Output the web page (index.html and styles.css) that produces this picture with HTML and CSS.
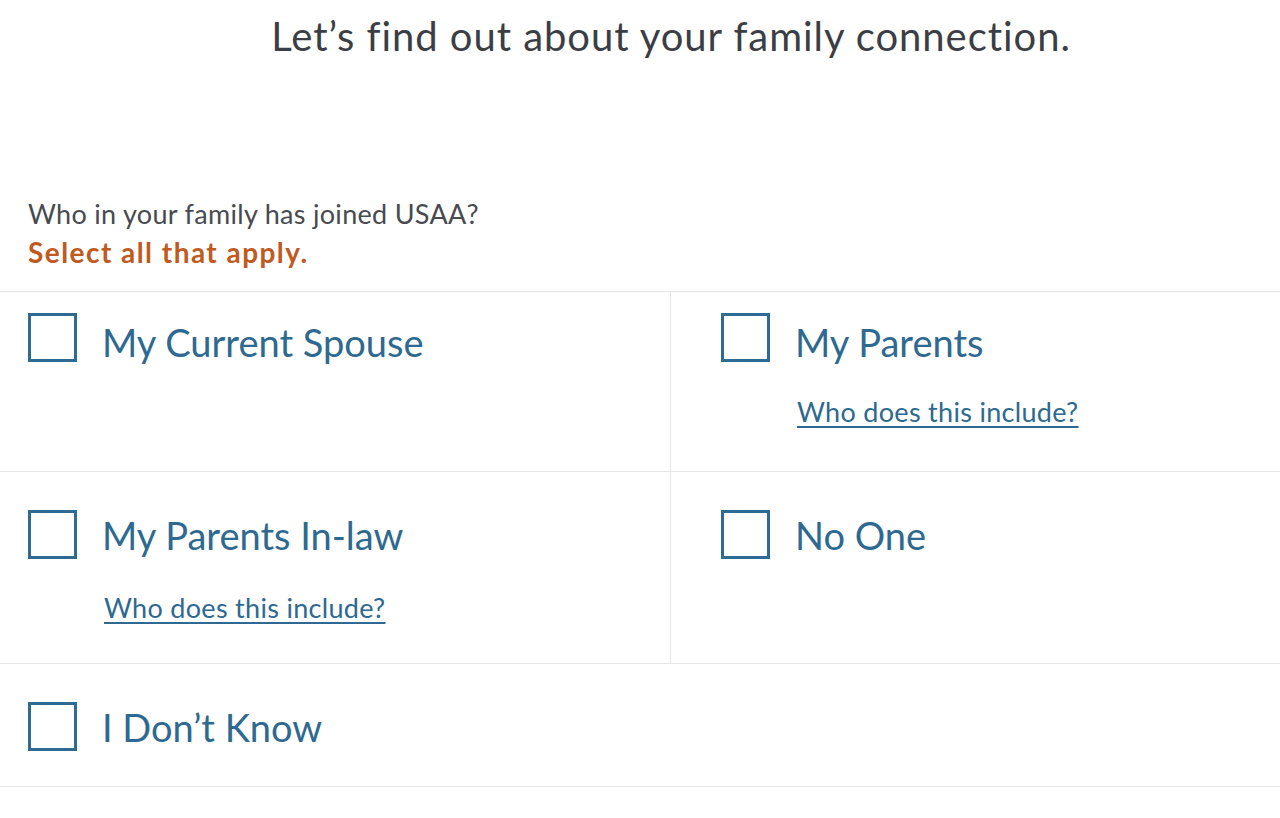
FILE: index.html
```html
<!DOCTYPE html>
<html lang="en">
<head>
<meta charset="utf-8">
<title>Family connection</title>
<link rel="stylesheet" href="styles.css">
</head>
<body>
<main class="page">
  <h1 class="title">Let’s find out about your family connection.</h1>
  <div class="question">
    <p class="q-text">Who in your family has joined USAA?</p>
    <p class="q-hint">Select all that apply.</p>
  </div>
  <div class="grid">
    <div class="cell cell-first cell-left">
      <label class="option"><span class="box"></span><span class="label">My Current Spouse</span></label>
    </div>
    <div class="cell cell-first cell-right">
      <label class="option"><span class="box"></span><span class="label">My Parents</span></label>
      <a class="link" href="#">Who does this include?</a>
    </div>
    <div class="cell cell-mid cell-left">
      <label class="option"><span class="box"></span><span class="label">My Parents In-law</span></label>
      <a class="link" href="#">Who does this include?</a>
    </div>
    <div class="cell cell-mid cell-right">
      <label class="option"><span class="box"></span><span class="label">No One</span></label>
    </div>
    <div class="cell cell-full">
      <label class="option"><span class="box"></span><span class="label">I Don’t Know</span></label>
    </div>
  </div>
</main>
</body>
</html>
```
FILE: styles.css
```css
html, body {
  margin: 0;
  padding: 0;
  background: #ffffff;
}
body {
  font-family: Lato, "Open Sans", sans-serif;
  width: 1280px;
  height: 818px;
  overflow: hidden;
}
.title {
  margin: 0;
  padding: 12px 0 0 62px;
  height: 185px;
  box-sizing: border-box;
  text-align: center;
  font-weight: 400;
  font-size: 40px;
  line-height: 48px;
  letter-spacing: 0.95px;
  color: #3b3e44;
}
.question {
  padding: 12px 28px 0;
  height: 106px;
  box-sizing: border-box;
}
.q-text {
  margin: 0;
  font-size: 27px;
  line-height: 34px;
  letter-spacing: 0.3px;
  color: #474a50;
}
.q-hint {
  margin: 4px 0 0;
  font-size: 28px;
  line-height: 34px;
  font-weight: 700;
  letter-spacing: 1.45px;
  color: #c05a1e;
}
.grid {
  display: grid;
  grid-template-columns: 671px 1fr;
  border-top: 1px solid #e6e6e6;
}
.cell {
  border-bottom: 1px solid #e6e6e6;
  box-sizing: border-box;
  display: flex;
  flex-direction: column;
  align-items: flex-start;
}
.cell-left {
  padding: 38px 0 0 28px;
  border-right: 1px solid #e6e6e6;
}
.cell-right {
  padding: 38px 0 0 50px;
}
.cell-first {
  padding-top: 21px;
  height: 180px;
}
.cell-mid {
  height: 192px;
}
.cell-full {
  grid-column: 1 / -1;
  height: 123px;
  padding: 38px 0 0 28px;
}
.option {
  display: flex;
  align-items: flex-start;
  gap: 27px;
  cursor: pointer;
}
.box {
  width: 49px;
  height: 49px;
  box-sizing: border-box;
  border: 3px solid #2e6a92;
  flex: none;
}
.label {
  font-size: 38px;
  line-height: 49px;
  padding-top: 1px;
  margin-left: -2px;
  color: #2d6990;
}
.cell-first .label {
  padding-top: 5px;
}
.link {
  margin: 29px 0 0 76px;
  font-size: 27px;
  line-height: 32px;
  letter-spacing: 0.3px;
  color: #2d6990;
  text-decoration: underline;
  text-decoration-thickness: 2px;
  text-underline-offset: 4px;
}
.cell-mid .link {
  margin-top: 32px;
}
```
